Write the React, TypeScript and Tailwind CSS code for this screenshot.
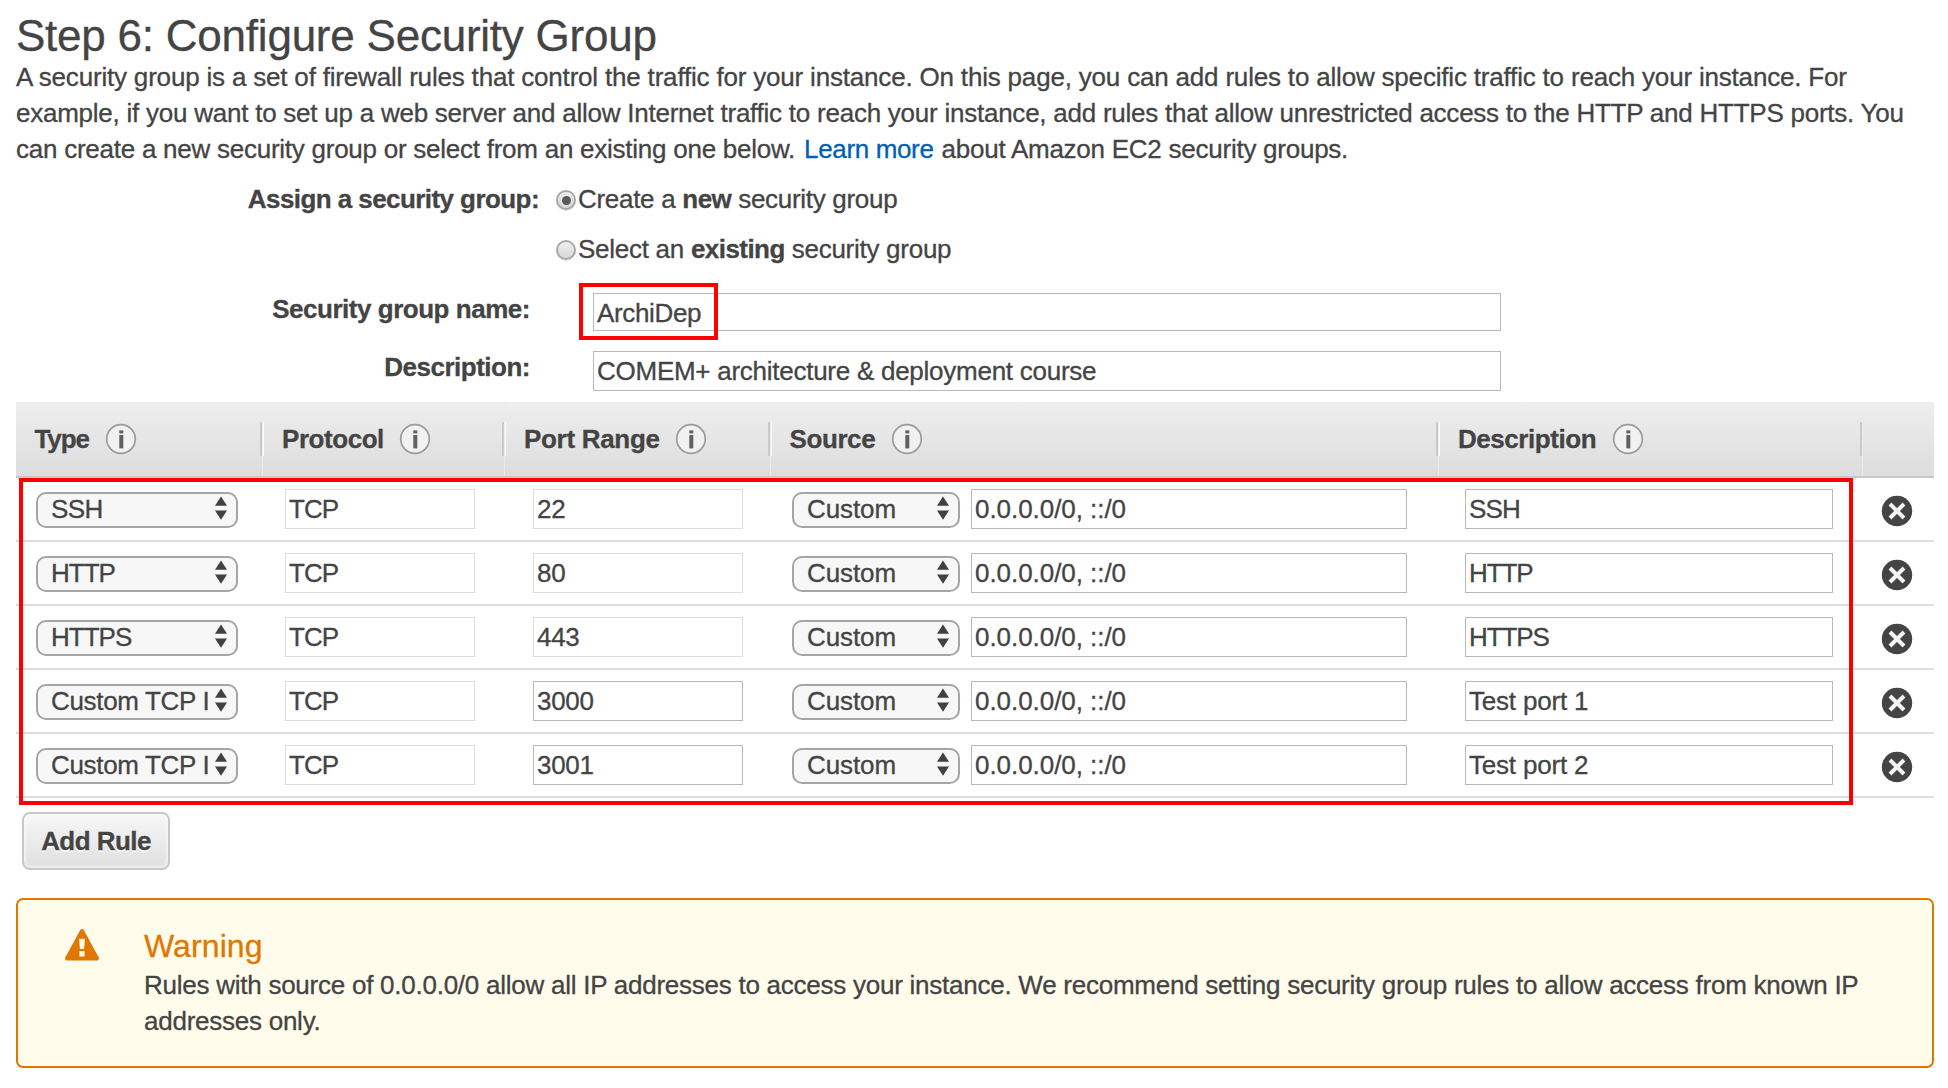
import type { ReactNode } from 'react'

type Rule = {
  type: string
  typeClass: string
  port: string
  portEditable: boolean
  description: string
  descriptionClass: string
}

const rules: Rule[] = [
  { type: 'SSH', typeClass: 'tracking-[-0.55px]', port: '22', portEditable: false, description: 'SSH', descriptionClass: 'tracking-[-0.8px]' },
  { type: 'HTTP', typeClass: 'tracking-[-1px]', port: '80', portEditable: false, description: 'HTTP', descriptionClass: 'tracking-[-1.1px]' },
  { type: 'HTTPS', typeClass: 'tracking-[-1px]', port: '443', portEditable: false, description: 'HTTPS', descriptionClass: 'tracking-[-1.1px]' },
  { type: 'Custom TCP I', typeClass: 'tracking-[-0.33px]', port: '3000', portEditable: true, description: 'Test port 1', descriptionClass: 'tracking-[-0.2px]' },
  { type: 'Custom TCP I', typeClass: 'tracking-[-0.33px]', port: '3001', portEditable: true, description: 'Test port 2', descriptionClass: 'tracking-[-0.2px]' },
]

const columns = 'grid grid-cols-[246px_242px_266px_668px_424px_72px]'

function InfoIcon() {
  return (
    <svg width="32" height="32" viewBox="0 0 32 32" className="shrink-0">
      <circle cx="16" cy="16" r="14.3" fill="#f1f1f1" stroke="#9b9b9b" strokeWidth="1.7" />
      <rect x="14.3" y="7.4" width="4" height="3" fill="#606060" />
      <rect x="14.3" y="12" width="4" height="13.4" fill="#606060" />
    </svg>
  )
}

function DeleteIcon() {
  return (
    <svg width="32" height="32" viewBox="0 0 32 32">
      <circle cx="16" cy="16" r="15.2" fill="#444" />
      <path d="M9 9 23 23M23 9 9 23" stroke="#f4f4f4" strokeWidth="4" />
    </svg>
  )
}

function WarningIcon() {
  return (
    <svg width="36" height="34" viewBox="0 0 36 34">
      <path d="M18 3 33 30.5H3Z" fill="#e07700" stroke="#e07700" strokeWidth="4" strokeLinejoin="round" />
      <path d="M15.1 10.8h5.8l-.8 10.2h-4.2zM15.4 23.2h5.2v5.2h-5.2z" fill="#fffceb" />
    </svg>
  )
}

function Radio({ checked }: { checked?: boolean }) {
  return (
    <span className="mt-[9px] flex size-[20px] shrink-0 items-center justify-center rounded-full border-2 border-[#a9a9a9] bg-linear-to-b from-[#eeeeee] to-[#d9d9d9] shadow-[0_1px_1px_rgba(0,0,0,0.12)]">
      {checked && <span className="size-[9px] rounded-full bg-[#5a5a5a]" />}
    </span>
  )
}

function TextBox({ className, children }: { className: string; children: ReactNode }) {
  return <div className={`flex items-center border bg-white pl-[3px] leading-[29px] whitespace-nowrap ${className}`}>{children}</div>
}

function SelectBox({ className, textClass, children }: { className: string; textClass: string; children: ReactNode }) {
  return (
    <div className={`mt-[2px] flex h-[36px] justify-between rounded-[10px] border-2 border-[#a5a5a5] bg-[#f7f7f7] pr-[9px] pl-[13px] ${className}`}>
      <span className={`leading-[30px] whitespace-nowrap ${textClass}`}>{children}</span>
      <svg width="12" height="32" viewBox="0 0 12 32" className="shrink-0">
        <path d="M6 2.5 12 11.7H0ZM0 16.5h12L6 25.7Z" fill="#404040" />
      </svg>
    </div>
  )
}

function HeaderCell({ children, first, last }: { children?: ReactNode; first?: boolean; last?: boolean }) {
  return (
    <div className={`flex h-[74px] items-center ${first ? '' : 'border-l border-[#ebebeb]'}`}>
      {!first && !last && <span className="h-[34px] w-px bg-white" />}
      <div className="flex flex-1 items-center">{children}</div>
      {!last && <span className="h-[34px] w-[2px] bg-[#cacaca]" />}
    </div>
  )
}

export default function App() {
  return (
    <div className="relative h-[1088px] w-[1948px] overflow-hidden bg-white pt-[13px] pl-[16px] font-['Liberation_Sans',Arial,sans-serif] text-[26px] leading-[36px] text-[#444] [-webkit-text-stroke:0.3px]">
      <h1 className="text-[44px] leading-[46px] tracking-[-0.23px]">Step 6: Configure Security Group</h1>
      <p className="whitespace-nowrap">
        <span className="block tracking-[-0.188px]">
          A security group is a set of firewall rules that control the traffic for your instance. On this page, you can add rules to allow specific traffic to reach your instance. For
        </span>
        <span className="block tracking-[-0.242px]">
          example, if you want to set up a web server and allow Internet traffic to reach your instance, add rules that allow unrestricted access to the HTTP and HTTPS ports. You
        </span>
        <span className="flex tracking-[-0.25px]">
          <span>can create a new security group or select from an existing one below.</span>
          <a className="ml-[9px] tracking-[-0.35px] text-[#0060b6]">Learn more</a>
          <span className="ml-[8px]">about Amazon EC2 security groups.</span>
        </span>
      </p>

      <div className="mt-[14px] flex">
        <b className="w-[523px] text-right tracking-[-0.57px]">Assign a security group:</b>
        <div className="ml-[17px] flex whitespace-pre">
          <Radio checked />
          <span className="ml-[2px] tracking-[-0.3px]">
            Create a <b className="tracking-[-0.5px]">new</b> security group
          </span>
        </div>
      </div>
      <div className="mt-[14px] ml-[540px] flex whitespace-pre">
        <Radio />
        <span className="ml-[2px] tracking-[-0.27px]">
          Select an <b className="tracking-[-0.55px]">existing</b> security group
        </span>
      </div>
      <div className="mt-[24px] flex h-[40px]">
        <b className="w-[514px] text-right tracking-[-0.47px]">Security group name:</b>
        <div className="relative mt-[2px] ml-[63px]">
          <TextBox className="h-[38px] w-[908px] border-[#b9b9b9] pt-[2px] tracking-[-0.35px]">ArchiDep</TextBox>
          <div className="absolute -top-[10px] -left-[14px] h-[57px] w-[139px] border-4 border-[#ff0000]" />
        </div>
      </div>
      <div className="mt-[18px] flex h-[42px]">
        <b className="w-[514px] text-right tracking-[-0.5px]">Description:</b>
        <TextBox className="mt-[2px] ml-[63px] h-[40px] w-[908px] border-[#b9b9b9] tracking-[-0.26px]">COMEM+ architecture &amp; deployment course</TextBox>
      </div>

      <div className="relative mt-[11px] w-[1918px]">
        <div className={`${columns} border-b-2 border-[#c8c8c8] bg-linear-to-b from-[#eeeeee] to-[#dddddd] font-bold`}>
          <HeaderCell first>
            <span className="ml-[18.5px] w-[70px] tracking-[-1.1px]">Type</span>
            <InfoIcon />
          </HeaderCell>
          <HeaderCell>
            <span className="ml-[18px] w-[117px] tracking-[-0.45px]">Protocol</span>
            <InfoIcon />
          </HeaderCell>
          <HeaderCell>
            <span className="ml-[18px] w-[151px] tracking-[-0.3px]">Port Range</span>
            <InfoIcon />
          </HeaderCell>
          <HeaderCell>
            <span className="ml-[17.5px] w-[101.5px] tracking-[-0.4px]">Source</span>
            <InfoIcon />
          </HeaderCell>
          <HeaderCell>
            <span className="ml-[18px] w-[153.5px] tracking-[-0.45px]">Description</span>
            <InfoIcon />
          </HeaderCell>
          <HeaderCell last />
        </div>
        {rules.map((rule, i) => (
          <div key={i} className={`${columns} h-[64px] items-center border-b-2 border-[#dfdfdf]`}>
            <div className="pl-[20px]">
              <SelectBox className="w-[202px]" textClass={rule.typeClass}>
                {rule.type}
              </SelectBox>
            </div>
            <div className="pl-[23px]">
              <TextBox className="h-[40px] w-[190px] border-[#dddddd] tracking-[-0.95px]">TCP</TextBox>
            </div>
            <div className="pl-[29px]">
              <TextBox className={`h-[40px] w-[210px] tracking-[-0.3px] ${rule.portEditable ? 'border-[#b9b9b9]' : 'border-[#dddddd]'}`}>{rule.port}</TextBox>
            </div>
            <div className="flex items-center gap-[11px] pl-[22px]">
              <SelectBox className="w-[168px]" textClass="tracking-[-0.1px]">
                Custom
              </SelectBox>
              <TextBox className="h-[40px] w-[436px] border-[#b9b9b9] tracking-[-0.05px]">0.0.0.0/0, ::/0</TextBox>
            </div>
            <div className="pl-[27px]">
              <TextBox className={`h-[40px] w-[368px] border-[#b9b9b9] ${rule.descriptionClass}`}>{rule.description}</TextBox>
            </div>
            <div className="pt-[4px] pl-[19px]">
              <DeleteIcon />
            </div>
          </div>
        ))}
        <div className="absolute top-[76px] left-[3px] h-[327px] w-[1834px] border-4 border-[#ff0000]" />
      </div>

      <button className="mt-[14px] ml-[6px] flex h-[58px] w-[148px] items-center justify-center rounded-[8px] border-2 border-[#c8c8c8] bg-linear-to-b from-[#f7f7f7] to-[#dfdfdf] font-bold tracking-[-0.55px] shadow-[inset_0_0_3px_2px_rgba(255,255,255,0.5)] text-shadow-[0_2px_0_rgba(255,255,255,0.9)]">
        Add Rule
      </button>

      <div className="mt-[28px] flex h-[170px] w-[1918px] rounded-[7px] border-2 border-[#e07700] bg-[#fffceb] pt-[27px] pl-[46px]">
        <div className="pt-px">
          <WarningIcon />
        </div>
        <div className="ml-[44px] whitespace-nowrap">
          <h2 className="text-[32px] leading-[39px] tracking-[0.1px] text-[#e07700]">Warning</h2>
          <p className="pt-px tracking-[-0.25px]">
            Rules with source of 0.0.0.0/0 allow all IP addresses to access your instance. We recommend setting security group rules to allow access from known IP
            <br />
            addresses only.
          </p>
        </div>
      </div>
    </div>
  )
}
